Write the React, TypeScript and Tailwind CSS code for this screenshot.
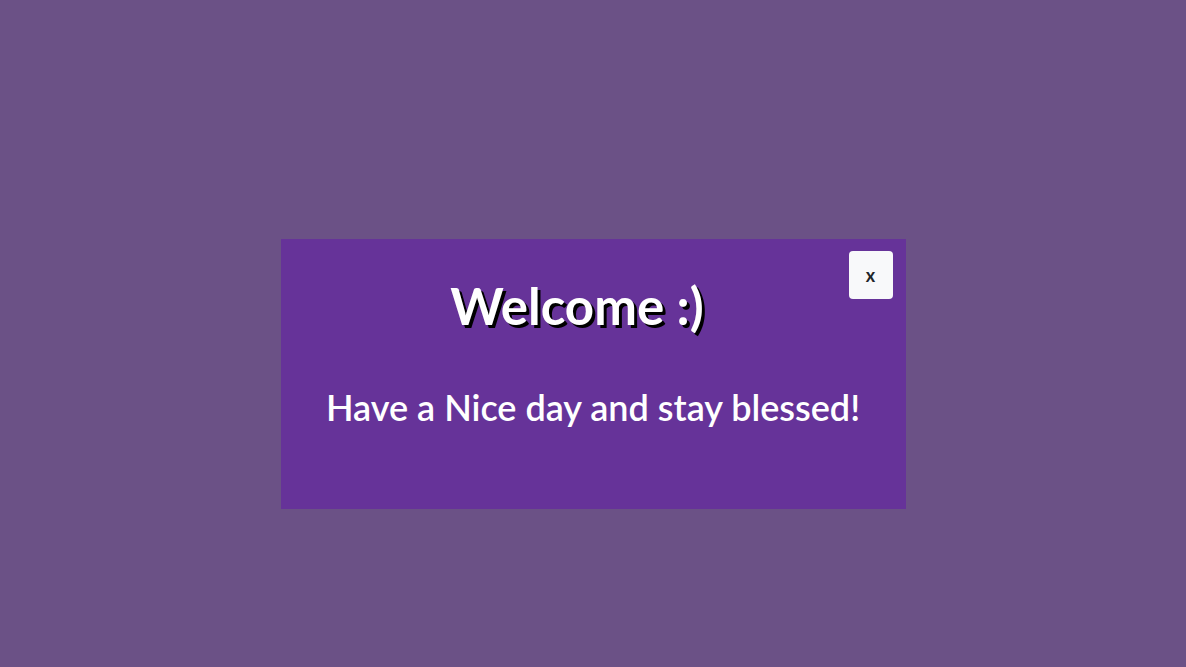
export default function App() {
  return (
    <div className="min-h-[667px] w-full bg-[#6b5186] pt-[239px]" style={{ fontFamily: 'Lato, "Open Sans", sans-serif' }}>
      <div className="mx-auto flex h-[270px] w-[625px] flex-col bg-[#663399] text-white">
        <div className="flex items-start pl-[25px] pr-[13px] pt-[12px]">
          <h1 className="flex-1 pt-[23px] text-center text-[51px] font-bold leading-[64px] [text-shadow:3px_3px_0_#000]">Welcome :)</h1>
          <button className="h-[48px] w-[44px] rounded-[4px] bg-[#f8f9fa] text-[18px] font-bold text-[#212529]">x</button>
        </div>
        <p className="mt-[47px] text-center text-[36px] font-semibold leading-[44px]">Have a Nice day and stay blessed!</p>
      </div>
    </div>
  );
}
